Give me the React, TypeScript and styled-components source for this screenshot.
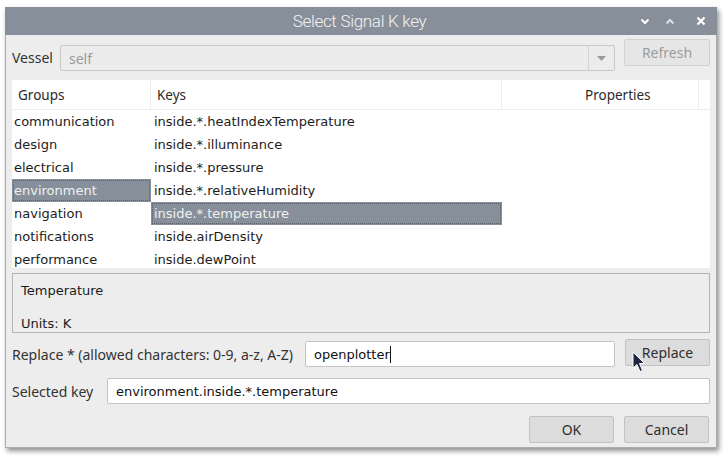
import React from "react";
import styled, { createGlobalStyle } from "styled-components";

const Global = createGlobalStyle`
  html, body { margin: 0; padding: 0; background: #ffffff; }
  body { font-family: "DejaVu Sans", "Noto Sans", sans-serif; }
  * { box-sizing: border-box; }
`;

const Page = styled.div`
  width: 724px;
  height: 458px;
  padding: 7px 0 0 5px;
  position: relative;
`;

const Window = styled.div`
  width: 712px;
  height: 441px;
  background: #ededed;
  border: 1px solid #a9acb0;
  border-top: none;
  box-shadow: 2px 3px 5px rgba(0, 0, 0, 0.45);
  display: flex;
  flex-direction: column;
`;

const TitleBar = styled.div`
  height: 28px;
  margin: 0 -1px;
  background: #87909a;
  display: grid;
  grid-template-columns: 1fr auto 1fr;
  align-items: center;
  padding: 0 11px 0 10px;
`;

const Title = styled.div`
  grid-column: 2;
  font-family: Roboto, "Liberation Sans", sans-serif;
  font-weight: 300;
  font-size: 17px;
  color: #f2f2f2;
  letter-spacing: -0.3px;
  margin-left: -2px;
`;

const Controls = styled.div`
  grid-column: 3;
  justify-self: end;
  display: flex;
  align-items: center;
  gap: 15px;
`;

const Body = styled.div`
  flex: 1;
  display: flex;
  flex-direction: column;
  padding: 5px 6px 0 6px;
`;

const Row = styled.div<{ $mt?: number }>`
  display: flex;
  align-items: center;
  margin-top: ${(p) => p.$mt ?? 0}px;
`;

const Label = styled.span<{ $w?: number }>`
  font-family: "Noto Sans", sans-serif;
  font-size: 14px;
  color: #333333;
  width: ${(p) => (p.$w ? `${p.$w}px` : "auto")};
  flex-shrink: 0;
`;

const Combo = styled.div`
  width: 555px;
  height: 26px;
  margin-top: 5px;
  border: 1px solid #c8c8c8;
  border-radius: 2px;
  background: #ececec;
  display: flex;
  align-items: center;
`;

const ComboText = styled.div`
  flex: 1;
  padding-left: 8px;
  font-family: "Noto Sans", sans-serif;
  font-size: 14px;
  color: #9a9a9a;
`;

const ComboArrow = styled.div`
  width: 26px;
  height: 100%;
  border-left: 1px solid #d4d4d4;
  display: flex;
  align-items: center;
  justify-content: center;
`;

const Button = styled.div<{ $disabled?: boolean; $w?: number }>`
  width: ${(p) => p.$w ?? 85}px;
  height: 27px;
  border: 1px solid ${(p) => (p.$disabled ? "#d2d2d2" : "#c2c2c2")};
  border-radius: 2px;
  background: ${(p) => (p.$disabled ? "#e6e6e6" : "#dcdcdc")};
  color: ${(p) => (p.$disabled ? "#9c9c9c" : "#2f2f2f")};
  font-family: "Noto Sans", sans-serif;
  font-size: 14px;
  display: flex;
  align-items: center;
  justify-content: center;
  flex-shrink: 0;
`;

const List = styled.div`
  margin-top: 9px;
  width: 698px;
  height: 188px;
  background: #ffffff;
  overflow: hidden;
`;

const HeaderRow = styled.div`
  display: grid;
  grid-template-columns: 139px 351px 197px 11px;
  height: 30px;
  border-bottom: 1px solid #ececec;
`;

const HeaderCell = styled.div<{ $pl: number; $last?: boolean }>`
  display: flex;
  align-items: center;
  padding-left: ${(p) => p.$pl}px;
  border-right: ${(p) => (p.$last ? "none" : "1px solid #ececec")};
  font-family: "Noto Sans", sans-serif;
  font-size: 13.5px;
  color: #2a2a2a;
`;

const DataRow = styled.div`
  display: grid;
  grid-template-columns: 139px 351px 208px;
  height: 23px;
`;

const Cell = styled.div<{ $sel?: boolean; $pl: number }>`
  display: flex;
  align-items: center;
  padding-left: ${(p) => p.$pl}px;
  font-size: 13px;
  color: ${(p) => (p.$sel ? "#eef0f2" : "#1c1c1c")};
  background: ${(p) => (p.$sel ? "#87909a" : "transparent")};
  position: relative;
  white-space: nowrap;
  &::after {
    content: "";
    display: ${(p) => (p.$sel ? "block" : "none")};
    position: absolute;
    inset: 1px;
    border: 1px dotted #5a6068;
  }
`;

const InfoBox = styled.div`
  margin-top: 5px;
  width: 698px;
  height: 60px;
  border: 1px solid #b4b4b4;
  padding: 9px 8px 1px 8px;
  display: flex;
  flex-direction: column;
  justify-content: space-between;
  font-size: 13px;
  color: #1c1c1c;
`;

const Input = styled.div<{ $w: number }>`
  width: ${(p) => p.$w}px;
  height: 26px;
  border: 1px solid #c4c4c4;
  border-radius: 2px;
  background: #ffffff;
  display: flex;
  align-items: center;
  padding-left: 8px;
  font-size: 13px;
  color: #111111;
  flex-shrink: 0;
`;

const Caret = styled.span`
  display: inline-block;
  width: 1px;
  height: 17px;
  background: #111;
`;

const Footer = styled.div`
  margin-top: 12px;
  display: flex;
  justify-content: flex-end;
  gap: 10px;
  padding-right: 1px;
`;

const Pointer = styled.svg`
  position: absolute;
  left: 632px;
  top: 351px;
`;

const groups = [
  "communication",
  "design",
  "electrical",
  "environment",
  "navigation",
  "notifications",
  "performance",
];
const keys = [
  "inside.*.heatIndexTemperature",
  "inside.*.illuminance",
  "inside.*.pressure",
  "inside.*.relativeHumidity",
  "inside.*.temperature",
  "inside.airDensity",
  "inside.dewPoint",
];

export default function App() {
  return (
    <Page>
      <Global />
      <Window>
        <TitleBar>
          <Title>Select Signal K key</Title>
          <Controls>
            <svg width="10" height="7" viewBox="0 0 10 7">
              <path d="M1.5 1.5 L5 5 L8.5 1.5" stroke="#fff" strokeWidth="2" fill="none" />
            </svg>
            <svg width="10" height="7" viewBox="0 0 10 7" style={{ opacity: 0.7 }}>
              <path d="M1.5 5.5 L5 2 L8.5 5.5" stroke="#fff" strokeWidth="2" fill="none" />
            </svg>
            <svg width="10" height="10" viewBox="0 0 10 10" style={{ marginLeft: 6 }}>
              <path d="M1.5 1.5 L8.5 8.5 M8.5 1.5 L1.5 8.5" stroke="#fff" strokeWidth="2.2" fill="none" />
            </svg>
          </Controls>
        </TitleBar>
        <Body>
          <Row style={{ alignItems: "flex-start" }}>
            <Label $w={48} style={{ marginTop: 8 }}>Vessel</Label>
            <Combo>
              <ComboText>self</ComboText>
              <ComboArrow>
                <svg width="9" height="5" viewBox="0 0 9 5">
                  <path d="M0 0 L9 0 L4.5 5 Z" fill="#9a9a9a" />
                </svg>
              </ComboArrow>
            </Combo>
            <div style={{ flex: 1 }} />
            <Button $disabled $w={86} style={{ marginTop: -1 }}>Refresh</Button>
          </Row>
          <List>
            <HeaderRow>
              <HeaderCell $pl={6}>Groups</HeaderCell>
              <HeaderCell $pl={6}>Keys</HeaderCell>
              <HeaderCell $pl={83}>Properties</HeaderCell>
              <HeaderCell $pl={0} $last />
            </HeaderRow>
            {groups.map((g, i) => (
              <DataRow key={g}>
                <Cell $pl={2} $sel={i === 3}>{g}</Cell>
                <Cell $pl={3} $sel={i === 4}>{keys[i]}</Cell>
                <Cell $pl={2} />
              </DataRow>
            ))}
          </List>
          <InfoBox>
            <div>Temperature</div>
            <div>Units: K</div>
          </InfoBox>
          <Row $mt={8}>
            <Label $w={293}>Replace * (allowed characters: 0-9, a-z, A-Z)</Label>
            <Input $w={310}>
              openplotter<Caret />
            </Input>
            <div style={{ flex: 1 }} />
            <Button $w={85} style={{ marginTop: -3 }}>Replace</Button>
          </Row>
          <Row $mt={11}>
            <Label $w={95}>Selected key</Label>
            <Input $w={603}>environment.inside.*.temperature</Input>
          </Row>
          <Footer>
            <Button $w={85}>OK</Button>
            <Button $w={85}>Cancel</Button>
          </Footer>
        </Body>
      </Window>
      <Pointer width="14" height="22" viewBox="0 0 14 22">
        <path
          d="M1 1 L1 17 L5 13.5 L8 20.5 L10.5 19.5 L7.5 12.5 L12.5 12.5 Z"
          fill="#1e2540"
          stroke="#ffffff"
          strokeWidth="1"
          strokeLinejoin="round"
        />
      </Pointer>
    </Page>
  );
}
